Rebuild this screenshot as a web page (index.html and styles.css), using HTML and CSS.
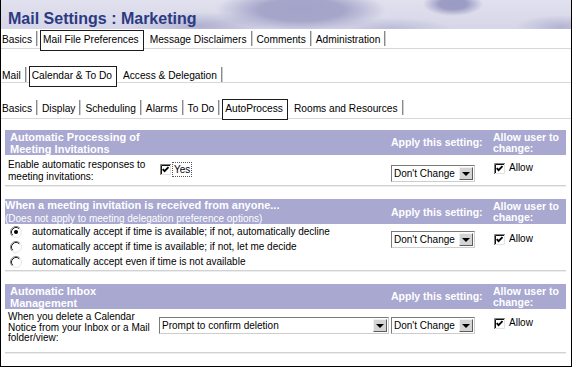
FILE: index.html
```html
<!DOCTYPE html>
<html>
<head>
<meta charset="utf-8">
<title>Mail Settings : Marketing</title>
<link rel="stylesheet" href="styles.css">
</head>
<body>
<div class="frame">
  <header class="banner">
    <h1 class="title">Mail Settings <span class="sub">: Marketing</span></h1>
  </header>

  <nav class="tabs tabs-1">
    <span class="tab first">Basics</span><span class="sep"></span>
    <span class="tab active">Mail File Preferences</span>
    <span class="tab">Message Disclaimers</span><span class="sep"></span>
    <span class="tab">Comments</span><span class="sep"></span>
    <span class="tab">Administration</span><span class="sep"></span>
  </nav>

  <nav class="tabs tabs-2">
    <span class="tab first">Mail</span><span class="sep"></span>
    <span class="tab active">Calendar &amp; To Do</span>
    <span class="tab">Access &amp; Delegation</span><span class="sep"></span>
  </nav>

  <nav class="tabs tabs-3">
    <span class="tab first">Basics</span><span class="sep"></span>
    <span class="tab">Display</span><span class="sep"></span>
    <span class="tab">Scheduling</span><span class="sep"></span>
    <span class="tab">Alarms</span><span class="sep"></span>
    <span class="tab">To Do</span><span class="sep"></span>
    <span class="tab active">AutoProcess</span>
    <span class="tab">Rooms and Resources</span><span class="sep"></span>
  </nav>

  <main class="panel">
    <section class="group">
      <div class="cols head">
        <div class="h-title">Automatic Processing of<br>Meeting Invitations</div>
        <div class="h-col h-apply">Apply this setting:</div>
        <div class="h-col h-allow">Allow user to<br>change:</div>
      </div>
      <div class="cols body body-1">
        <div class="label lh-1">Enable automatic responses to<br>meeting invitations:</div>
        <div class="value v-1">
          <svg class="cb" width="11" height="11" viewBox="0 0 11 11"><rect width="11" height="11" fill="#fff"/><path d="M0.5 11V0.5H11" fill="none" stroke="#808080"/><path d="M1.5 10V1.5H10" fill="none" stroke="#111"/><path d="M1 10.5H10.5V1" fill="none" stroke="#e2e2e2"/><path d="M2.7 5.1L4.6 7.2L8.5 3.1" fill="none" stroke="#000" stroke-width="1.8"/></svg>
          <span class="focus">Yes</span>
        </div>
        <div class="apply a-1">
          <div class="select sm"><span class="select-text">Don't Change</span><span class="select-btn"></span></div>
        </div>
        <div class="allow al-1">
          <svg class="cb" width="11" height="11" viewBox="0 0 11 11"><rect width="11" height="11" fill="#fff"/><path d="M0.5 11V0.5H11" fill="none" stroke="#808080"/><path d="M1.5 10V1.5H10" fill="none" stroke="#111"/><path d="M1 10.5H10.5V1" fill="none" stroke="#e2e2e2"/><path d="M2.7 5.1L4.6 7.2L8.5 3.1" fill="none" stroke="#000" stroke-width="1.8"/></svg>
          <span>Allow</span>
        </div>
      </div>
    </section>

    <section class="group">
      <div class="cols head">
        <div class="h-title flush"><b>When a meeting invitation is received from anyone...</b><br><span class="h-note">(Does not apply to meeting delegation preference options)</span></div>
        <div class="h-col h-apply">Apply this setting:</div>
        <div class="h-col h-allow">Allow user to<br>change:</div>
      </div>
      <div class="cols body body-2">
        <ul class="radios">
          <li><svg class="rb" width="12" height="12" viewBox="0 0 12 12"><circle cx="6" cy="6" r="5.5" fill="#fff"/><path d="M2.11 9.89A5.5 5.5 0 0 1 9.89 2.11" fill="none" stroke="#808080"/><path d="M9.89 2.11A5.5 5.5 0 0 1 2.11 9.89" fill="none" stroke="#e6e6e6"/><path d="M2.82 9.18A4.5 4.5 0 0 1 9.18 2.82" fill="none" stroke="#222"/><circle cx="6" cy="6" r="2" fill="#000"/></svg>automatically accept if time is available; if not, automatically decline</li>
          <li><svg class="rb" width="12" height="12" viewBox="0 0 12 12"><circle cx="6" cy="6" r="5.5" fill="#fff"/><path d="M2.11 9.89A5.5 5.5 0 0 1 9.89 2.11" fill="none" stroke="#808080"/><path d="M9.89 2.11A5.5 5.5 0 0 1 2.11 9.89" fill="none" stroke="#e6e6e6"/><path d="M2.82 9.18A4.5 4.5 0 0 1 9.18 2.82" fill="none" stroke="#222"/></svg>automatically accept if time is available; if not, let me decide</li>
          <li><svg class="rb" width="12" height="12" viewBox="0 0 12 12"><circle cx="6" cy="6" r="5.5" fill="#fff"/><path d="M2.11 9.89A5.5 5.5 0 0 1 9.89 2.11" fill="none" stroke="#808080"/><path d="M9.89 2.11A5.5 5.5 0 0 1 2.11 9.89" fill="none" stroke="#e6e6e6"/><path d="M2.82 9.18A4.5 4.5 0 0 1 9.18 2.82" fill="none" stroke="#222"/></svg>automatically accept even if time is not available</li>
        </ul>
        <div class="apply a-2">
          <div class="select sm"><span class="select-text">Don't Change</span><span class="select-btn"></span></div>
        </div>
        <div class="allow al-2">
          <svg class="cb" width="11" height="11" viewBox="0 0 11 11"><rect width="11" height="11" fill="#fff"/><path d="M0.5 11V0.5H11" fill="none" stroke="#808080"/><path d="M1.5 10V1.5H10" fill="none" stroke="#111"/><path d="M1 10.5H10.5V1" fill="none" stroke="#e2e2e2"/><path d="M2.7 5.1L4.6 7.2L8.5 3.1" fill="none" stroke="#000" stroke-width="1.8"/></svg>
          <span>Allow</span>
        </div>
      </div>
    </section>

    <section class="group">
      <div class="cols head">
        <div class="h-title">Automatic Inbox<br>Management</div>
        <div class="h-col h-apply">Apply this setting:</div>
        <div class="h-col h-allow">Allow user to<br>change:</div>
      </div>
      <div class="cols body body-3">
        <div class="label lh-3">When you delete a Calendar<br>Notice from your Inbox or a Mail<br>folder/view:</div>
        <div class="value v-3">
          <div class="select lg"><span class="select-text">Prompt to confirm deletion</span><span class="select-btn"></span></div>
        </div>
        <div class="apply a-3">
          <div class="select sm"><span class="select-text">Don't Change</span><span class="select-btn"></span></div>
        </div>
        <div class="allow al-3">
          <svg class="cb" width="11" height="11" viewBox="0 0 11 11"><rect width="11" height="11" fill="#fff"/><path d="M0.5 11V0.5H11" fill="none" stroke="#808080"/><path d="M1.5 10V1.5H10" fill="none" stroke="#111"/><path d="M1 10.5H10.5V1" fill="none" stroke="#e2e2e2"/><path d="M2.7 5.1L4.6 7.2L8.5 3.1" fill="none" stroke="#000" stroke-width="1.8"/></svg>
          <span>Allow</span>
        </div>
      </div>
    </section>
  </main>
</div>
</body>
</html>
```

FILE: styles.css
```css
html, body {
  margin: 0;
  padding: 0;
  background: #fff;
}

body {
  font-family: "Liberation Sans", Arial, sans-serif;
  font-size: 10px;
  color: #000;
}

.frame {
  width: 572px;
  height: 367px;
  box-sizing: border-box;
  border: 1px solid #000;
  border-top: 0;
  overflow: hidden;
}

/* ---------- banner ---------- */
.banner {
  height: 29px;
  box-sizing: border-box;
  padding: 11px 0 0 7px;
  background:
    radial-gradient(ellipse 30px 12px at 452px 4px, #9a9ac4 0%, #9c9cc5 45%, rgba(156,156,197,0) 100%),
    radial-gradient(ellipse 85px 22px at 300px 10px, #a3a3c9 0%, #a6a6cb 50%, rgba(166,166,203,0) 100%),
    radial-gradient(ellipse 70px 14px at 200px 26px, rgba(172,172,206,0.9), rgba(172,172,206,0)),
    radial-gradient(ellipse 45px 12px at 560px 27px, rgba(176,176,208,0.9), rgba(176,176,208,0)),
    radial-gradient(ellipse 60px 10px at 390px 28px, rgba(182,182,212,0.8), rgba(182,182,212,0)),
    linear-gradient(180deg, #e0e0ee 0%, #d6d6e8 100%);
}

.title {
  margin: 0;
  font-size: 16px;
  line-height: 16px;
  font-weight: bold;
  color: #2b3a82;
  white-space: nowrap;
}

/* ---------- tab rows ---------- */
.tabs {
  display: flex;
  align-items: flex-start;
  box-sizing: border-box;
  padding-top: 1px;
  border-bottom: 1px solid #d8d8d8;
  font-size: 10.2px;
}

.tabs-1 { height: 20px; }
.tabs-2 { height: 18px; margin-top: 16px; }
.tabs-3 { height: 21px; margin-top: 15px; }

.tab {
  padding: 3px 4px 0;
  line-height: 14px;
  white-space: nowrap;
}

.tab.first { padding-left: 1px; }

.tab.active {
  position: relative;
  z-index: 1;
  margin: 0 2px;
  padding: 2px 4px 3px 2px;
  border: 1px solid #1c1c1c;
  background: #fff;
}

.sep {
  width: 1px;
  height: 15px;
  margin-top: 1px;
  border-left: 1px solid #8a8a8a;
  background: #cfcfcf;
}

/* ---------- panel ---------- */
.panel {
  margin: 11px 5px 0 4px;
}

.group + .group { margin-top: 13px; }

.cols {
  display: grid;
  grid-template-columns: 154px 232px 100px 1fr;
}

.head {
  height: 25px;
  background: #a8a8d0;
  color: #fff;
  align-items: center;
}

.h-title {
  grid-column: span 2;
  padding-left: 5px;
  font-weight: bold;
  font-size: 11px;
  line-height: 12px;
}

.h-title.flush {
  padding-left: 0;
  line-height: 13px;
}

.h-note {
  font-weight: normal;
  font-size: 10px;
  line-height: 12px;
}

.h-col {
  font-weight: bold;
  font-size: 10.5px;
  line-height: 11px;
}

.h-allow { padding-left: 2px; }

.body {
  box-sizing: border-box;
  border-bottom: 1px solid #d2d2d2;
  box-shadow: 0 1px 0 #ededed;
  align-items: start;
}

.body-1 { height: 31px; }
.body-2 { height: 47px; }
.body-3 { height: 44px; }

.label { padding-left: 3px; }
.lh-1 { line-height: 11.5px; padding-top: 4px; }
.lh-3 { line-height: 10.5px; padding-top: 3px; }

.value {
  display: flex;
  align-items: center;
}

.v-1 { padding: 7px 0 0 1px; gap: 1px; }
.v-3 { padding-top: 8px; }

.focus {
  border: 1px dotted #555;
  padding: 0 1px;
  line-height: 13px;
}

.cb { display: block; flex: none; }

.apply { padding-top: 10px; }
.a-2 { padding-top: 7px; }
.a-3 { padding-top: 8px; }

.allow {
  display: flex;
  align-items: center;
  gap: 4px;
  padding-left: 3px;
  line-height: 12px;
}

.al-1 { padding-top: 7px; }
.al-2 { padding-top: 9px; }
.al-3 { padding-top: 8px; }

/* ---------- radios ---------- */
.radios {
  grid-column: span 2;
  list-style: none;
  margin: 0;
  padding: 0 0 0 5px;
}

.radios li {
  display: flex;
  align-items: center;
  height: 15.3px;
  line-height: 12px;
  white-space: nowrap;
}

.rb {
  display: block;
  flex: none;
  margin-right: 10px;
}

/* ---------- fake selects ---------- */
.select {
  display: flex;
  box-sizing: border-box;
  height: 17px;
  border: 1px solid;
  border-color: #7a7a7a #cdcdcd #cdcdcd #7a7a7a;
  background: #fff;
}

.select.sm { width: 84px; }
.select.lg { width: 230px; }

.select-text {
  flex: 1;
  padding-left: 2px;
  line-height: 15px;
  white-space: nowrap;
  overflow: hidden;
}

.select-btn {
  flex: none;
  width: 14px;
  margin: 1px;
  box-sizing: border-box;
  border: 1px solid;
  border-color: #f2f2f2 #5c5c5c #5c5c5c #f2f2f2;
  background: #d4d4d4;
  display: flex;
  align-items: center;
  justify-content: center;
}

.select-btn::after {
  content: "";
  width: 0;
  height: 0;
  border-left: 4px solid transparent;
  border-right: 4px solid transparent;
  border-top: 4px solid #000;
}
```
